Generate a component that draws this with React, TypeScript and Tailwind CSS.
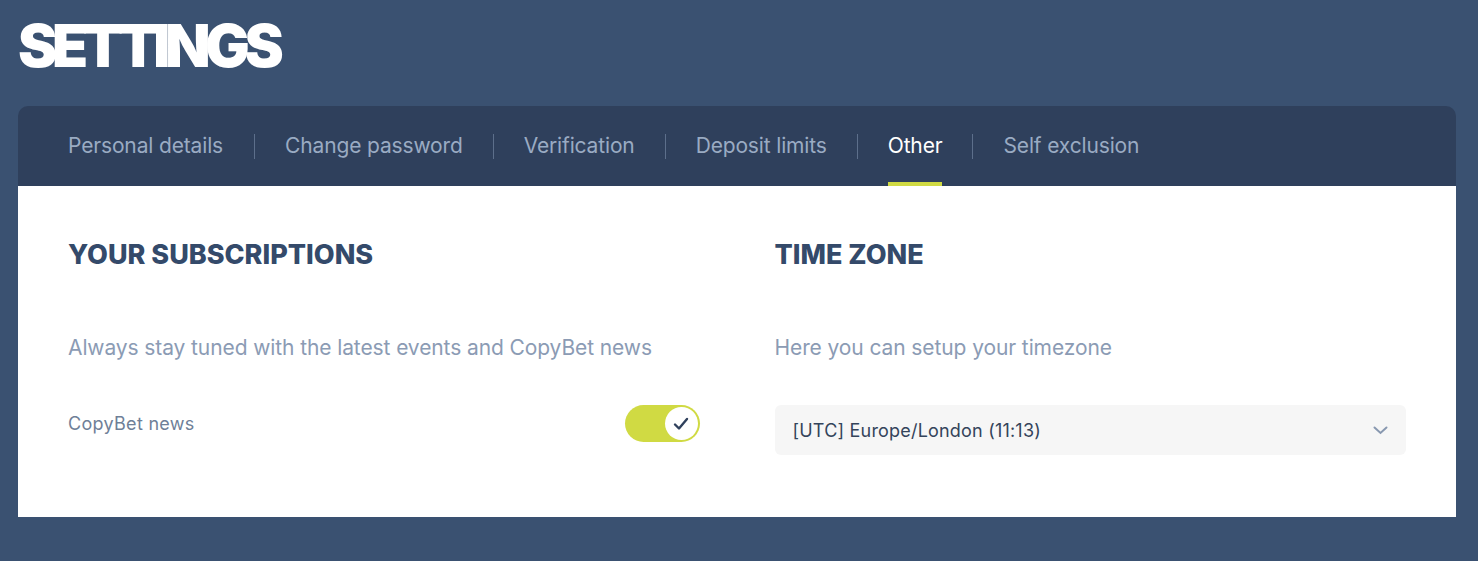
import React from 'react';

const tabs = ['Personal details', 'Change password', 'Verification', 'Deposit limits', 'Other', 'Self exclusion'];

function Toggle() {
  return (
    <div className="w-[75px] h-[37px] rounded-full bg-[#d0da43] flex items-center justify-end pr-[2px]">
      <div className="w-[33px] h-[33px] rounded-full bg-white flex items-center justify-center">
        <svg width="16" height="14" viewBox="0 0 16 14" fill="none">
          <path d="M2 7.5L6 11.5L14 2" stroke="#2f405c" strokeWidth="2.4" strokeLinecap="round" strokeLinejoin="round" />
        </svg>
      </div>
    </div>
  );
}

export default function App() {
  return (
    <div className="w-[1478px] h-[561px] bg-[#3a5171] px-[18px] pt-[14px] font-['Inter',sans-serif] overflow-hidden">
      {/* Title */}
      <h1 className="text-white text-[59px] leading-[64px] font-black tracking-[-5.3px] h-[92px]">SETTINGS</h1>

      {/* Panel */}
      <div className="w-[1438px]">
        {/* Tabs */}
        <div className="h-[80px] bg-[#2f405c] rounded-t-[10px] flex items-stretch pl-[50px]">
          {tabs.map((t, i) => (
            <div key={t} className="flex items-center">
              {i > 0 && <div className="w-px h-[25px] bg-[#5d6f8b]" />}
              <div
                className={`relative h-full flex items-center text-[21px] tracking-[-0.15px] ${i === 0 ? 'pr-[31px]' : 'px-[30px]'} ${
                  t === 'Other' ? 'text-white' : 'text-[#9aabc3]'
                }`}
              >
                <span className="relative h-full flex items-center">
                  {t}
                  {t === 'Other' && <span className="absolute left-0 right-0 bottom-0 h-[4px] bg-[#d0da43]" />}
                </span>
              </div>
            </div>
          ))}
        </div>

        {/* Body */}
        <div className="bg-white h-[331px] px-[50px] pt-[52px] grid grid-cols-2 gap-[75px]">
          <div>
            <h2 className="text-[#344a6a] text-[27px] leading-[34px] font-extrabold tracking-[0px]">YOUR SUBSCRIPTIONS</h2>
            <p className="mt-[62px] text-[#8b9bb4] text-[21px] leading-[28px] tracking-[-0.1px]">
              Always stay tuned with the latest events and CopyBet news
            </p>
            <div className="mt-[43px] flex items-center justify-between">
              <span className="text-[#6f7f98] text-[18px] tracking-[0.3px]">CopyBet news</span>
              <Toggle />
            </div>
          </div>
          <div>
            <h2 className="text-[#344a6a] text-[27px] leading-[34px] font-extrabold tracking-[0px]">TIME ZONE</h2>
            <p className="mt-[62px] text-[#8b9bb4] text-[21px] leading-[28px] tracking-[-0.1px]">
              Here you can setup your timezone
            </p>
            <div className="mt-[43px] h-[50px] rounded-[6px] bg-[#f6f6f6] flex items-center justify-between pl-[18px] pr-[18px]">
              <span className="text-[#34445b] text-[18px] tracking-[0.2px]">[UTC] Europe/London (11:13)</span>
              <svg width="15" height="9" viewBox="0 0 15 9" fill="none">
                <path d="M1.5 1.5L7.5 7L13.5 1.5" stroke="#8898b0" strokeWidth="2" strokeLinecap="round" />
              </svg>
            </div>
          </div>
        </div>
      </div>
    </div>
  );
}
